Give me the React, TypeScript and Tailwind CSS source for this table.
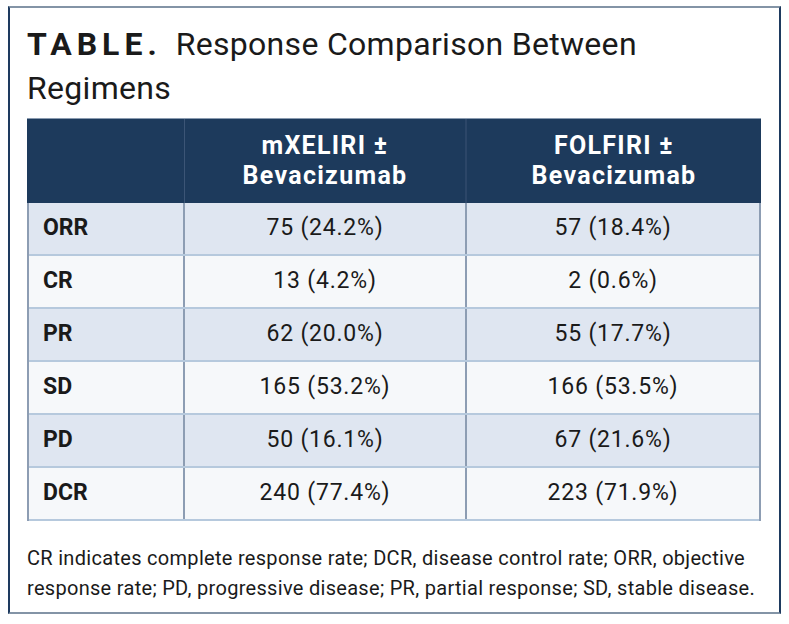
import React from "react";

const rows: [string, string, string][] = [
  ["ORR", "75 (24.2%)", "57 (18.4%)"],
  ["CR", "13 (4.2%)", "2 (0.6%)"],
  ["PR", "62 (20.0%)", "55 (17.7%)"],
  ["SD", "165 (53.2%)", "166 (53.5%)"],
  ["PD", "50 (16.1%)", "67 (21.6%)"],
  ["DCR", "240 (77.4%)", "223 (71.9%)"],
];

export default function App() {
  return (
    <div className="w-[789px] h-[624px] bg-white pt-[6px] px-[8px]" style={{ fontFamily: "Roboto, 'Liberation Sans', sans-serif" }}>
      <div className="h-[608px] border-x-2 border-x-[#1e3a5f] border-y-2 border-y-[#8394a6] pl-[17px] pr-[19px] pt-[14px]">
        <div className="text-[32px] leading-[44px] text-[#1a1a1a]">
          <div className="flex">
            <span className="font-bold tracking-[5px]">TABLE.</span>
            <span className="ml-[14px] tracking-[0.3px]">Response Comparison Between</span>
          </div>
          <div className="tracking-[0.3px]">Regimens</div>
        </div>
        <div className="mt-[8px] w-[734px]">
          <div className="grid grid-cols-[158px_282px_294px] h-[85px] bg-[#1d3a5c] border-t border-[#8a9bb0]">
            <div className="border-r border-[#3c5576]" />
            <div className="flex items-center justify-center text-center text-white font-bold text-[25px] leading-[30px] tracking-[1.3px] border-r-2 border-[#2c4668]">
              mXELIRI ±<br />Bevacizumab
            </div>
            <div className="flex items-center justify-center text-center text-white font-bold text-[25px] leading-[30px] tracking-[1.3px]">
              FOLFIRI ±<br />Bevacizumab
            </div>
          </div>
          <div className="border-l-2 border-r-2 border-[#8d9db3]">
            {rows.map((r, i) => (
              <div
                key={r[0]}
                className={`grid grid-cols-[156px_282px_292px] h-[53px] border-b-2 border-[#b6c9dd] ${i % 2 === 0 ? "bg-[#dfe6f1]" : "bg-[#f6f8fa]"}`}
              >
                <div className="flex items-center pl-[14px] font-bold text-[23px] text-[#1a1a1a] border-r-2 border-[#8d9db3]">{r[0]}</div>
                <div className="flex items-center justify-center text-[23px] text-[#1a1a1a] tracking-[0.8px] border-r-2 border-[#8d9db3]">{r[1]}</div>
                <div className="flex items-center justify-center text-[23px] text-[#1a1a1a] tracking-[0.8px]">{r[2]}</div>
              </div>
            ))}
          </div>
        </div>
        <div className="mt-[22px] text-[20px] leading-[30px] tracking-[0.3px] text-[#1a1a1a]">
          CR indicates complete response rate; DCR, disease control rate; ORR, objective response rate; PD, progressive disease; PR, partial response; SD, stable disease.
        </div>
      </div>
    </div>
  );
}
